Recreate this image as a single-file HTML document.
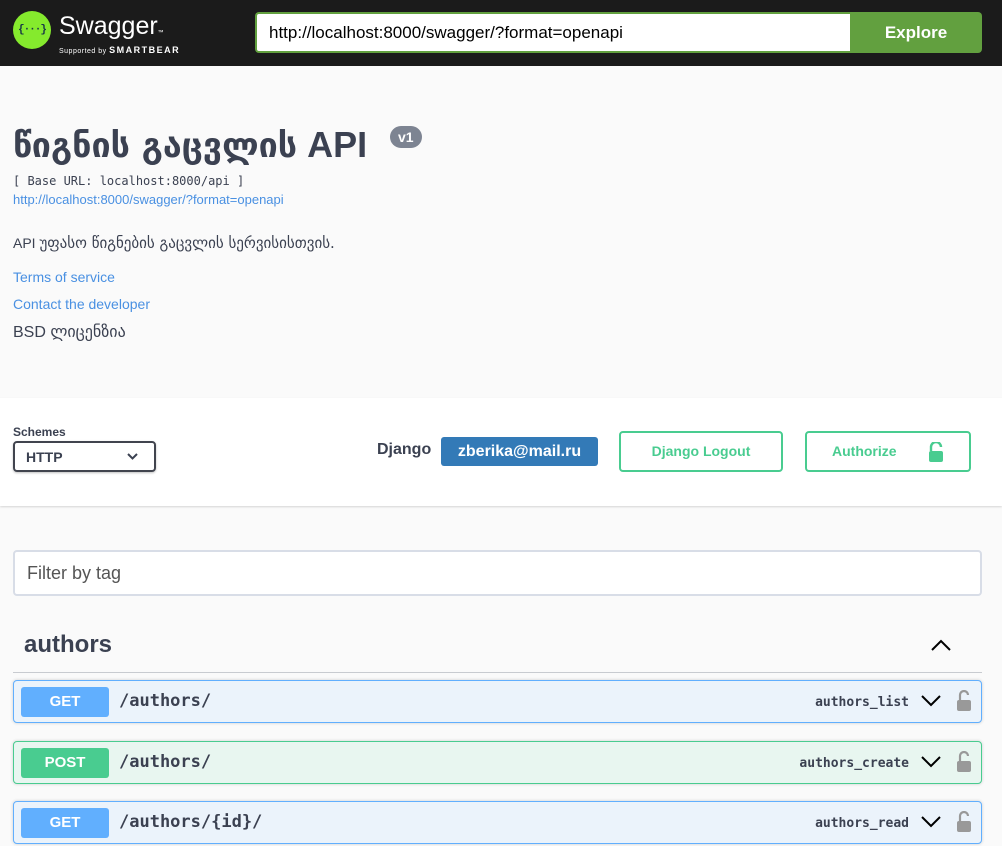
<!DOCTYPE html>
<html><head><meta charset="utf-8"><style>
*{box-sizing:border-box;margin:0;padding:0}
body{width:1002px;height:846px;overflow:hidden;background:#fafafa;font-family:"Liberation Sans","DejaVu Sans",sans-serif;color:#3b4151;position:relative}
.top{position:absolute;left:0;top:0;width:1002px;height:66px;background:#1b1b1b}
.logo{position:absolute;left:13px;top:11px;width:38px;height:38px;border-radius:50%;background:#85ea2d;color:#173647;font:bold 11px "Liberation Mono",monospace;text-align:center;line-height:38px;letter-spacing:-1px}
.sw{position:absolute;left:59px;top:12px;color:#fff;font-size:25px}
.sb{position:absolute;left:59px;top:45px;color:#fff;font-size:7px;letter-spacing:.5px}
.sb b{font-size:9px;letter-spacing:1.5px}
.url{position:absolute;left:255px;top:12px;width:596px;height:41px;border:2px solid #62a03f;border-right:none;border-radius:4px 0 0 4px;background:#fff;font-size:17px;padding:9px 12px;color:#000}
.exp{position:absolute;left:850px;top:12px;width:132px;height:41px;background:#62a03f;color:#fff;font-weight:bold;font-size:17px;text-align:center;line-height:41px;border-radius:0 4px 4px 0}
.a{position:absolute;white-space:nowrap}
h1{position:absolute;left:13px;top:124px;font-size:36px;font-weight:bold;color:#3b4151;white-space:nowrap}
h1 .g{font-family:"DejaVu Sans",sans-serif;font-weight:bold;font-size:34px}
h1 .e{font-family:"Liberation Sans",sans-serif;font-weight:bold;font-size:36px}
.v1{position:absolute;left:390px;top:126px;background:#7d8492;color:#fff;font:bold 14px "Liberation Sans",sans-serif;border-radius:12px;padding:3px 8px}
.lnk{color:#4990e2}
.sch{position:absolute;left:0;top:398px;width:1002px;height:108px;background:#fff;box-shadow:0 1px 2px rgba(0,0,0,.15)}
.sel{position:absolute;left:13px;top:441px;width:143px;height:31px;border:2px solid #41444e;border-radius:4px;box-shadow:0 1px 2px rgba(0,0,0,.25);font-weight:bold;font-size:14px;padding:6px 11px}
.btn{position:absolute;top:431px;height:41px;border:2px solid #49cc90;border-radius:4px;color:#49cc90;font-weight:bold;font-size:14px;text-align:center;line-height:37px}
.filt{position:absolute;left:13px;top:550px;width:969px;height:46px;border:2px solid #d8dde7;border-radius:4px;background:#fff;font-size:18px;color:#555;padding:11px 12px}
.op{position:absolute;left:13px;width:969px;height:43px;border:1px solid #61affe;border-radius:4px;background:#ebf3fb;box-shadow:0 0 3px rgba(0,0,0,.19)}
.op.p{border-color:#49cc90;background:#e8f6f0}
.m{position:absolute;left:7px;top:6px;width:88px;height:30px;background:#61affe;border-radius:3px;color:#fff;font-weight:bold;font-size:15px;text-align:center;line-height:30px}
.p .m{background:#49cc90}
.path{position:absolute;left:105px;top:10px;font:bold 17px "DejaVu Sans Mono","Liberation Mono",monospace;color:#3b4151}
.id{position:absolute;right:72px;top:14px;font:bold 13px "DejaVu Sans Mono","Liberation Mono",monospace;color:#3b4151}
.chev{position:absolute;right:40px;top:13px}
.lock{position:absolute;right:9px;top:9px}
</style></head><body>
<div class="top">
<div class="logo">{···}</div>
<div class="sw">Swagger<span style="font-size:6px">™</span></div>
<div class="sb">Supported by <b>SMARTBEAR</b></div>
<div class="url">http://localhost:8000/swagger/?format=openapi</div>
<div class="exp">Explore</div>
</div>
<h1><span class="g">წიგნის გაცვლის</span> <span class="e">API</span></h1>
<div class="v1">v1</div>
<div class="a" style="left:13px;top:174px;font:12px 'DejaVu Sans Mono','Liberation Mono',monospace;color:#3b4151">[ Base URL: localhost:8000/api ]</div>
<div class="a lnk" style="left:13px;top:192px;font-size:13px">http://localhost:8000/swagger/?format=openapi</div>
<div class="a" style="left:13px;top:234px;font-size:14px">API <span style="font-family:'DejaVu Sans',sans-serif;font-size:15px">უფასო წიგნების გაცვლის სერვისისთვის.</span></div>
<div class="a lnk" style="left:13px;top:269px;font-size:14px">Terms of service</div>
<div class="a lnk" style="left:13px;top:296px;font-size:14px">Contact the developer</div>
<div class="a" style="left:13px;top:322px;font-size:16px">BSD <span style="font-family:'DejaVu Sans',sans-serif;font-size:16px">ლიცენზია</span></div>
<div class="sch"></div>
<div class="a" style="left:13px;top:425px;font-size:12px;font-weight:bold">Schemes</div>
<div class="sel">HTTP<svg style="position:absolute;right:16px;top:10px" width="11" height="8" viewBox="0 0 11 8"><path d="M1 1l4.5 4.5L10 1" stroke="#3b4151" stroke-width="2" fill="none"/></svg></div>
<div class="a" style="left:377px;top:441px;font-size:16px;font-weight:bold">Django</div>
<div class="a" style="left:441px;top:437px;width:157px;height:29px;background:#337ab7;color:#fff;font-weight:bold;font-size:16px;border-radius:3px;text-align:center;line-height:29px">zberika@mail.ru</div>
<div class="btn" style="left:619px;width:164px">Django Logout</div>
<div class="btn" style="left:805px;width:166px;text-align:left;padding-left:25px">Authorize<svg style="position:absolute;left:120px;top:9px" width="18" height="20" viewBox="0 0 18 20"><path d="M4 9V5a5 5 0 0 1 10 0" stroke="#49cc90" stroke-width="2.4" fill="none"/><rect x="2" y="9" width="14" height="11" rx="2" fill="#49cc90"/></svg></div>
<div class="filt">Filter by tag</div>
<div class="a" style="left:24px;top:631px;font-size:24px;font-weight:bold">authors</div>
<svg style="position:absolute;left:931px;top:638px" width="20" height="14" viewBox="0 0 20 14"><path d="M1 12L10 3l9 9" stroke="#000" stroke-width="2" fill="none"/></svg>
<div style="position:absolute;left:13px;top:672px;width:969px;height:1px;background:#c8cbd0"></div>
<div class="op" style="top:680px"><div class="m">GET</div><div class="path">/authors/</div><div class="id">authors_list</div>
<svg class="chev" width="20" height="14" viewBox="0 0 20 14"><path d="M1 2l9 9 9-9" stroke="#000" stroke-width="2" fill="none"/></svg>
<svg class="lock" width="16" height="22" viewBox="0 0 16 22"><path d="M4 10V5a4 4 0 0 1 8 0" stroke="#999" stroke-width="2.2" fill="none"/><rect x="1" y="10" width="14" height="11" rx="2" fill="#999"/></svg></div>
<div class="op p" style="top:741px"><div class="m">POST</div><div class="path">/authors/</div><div class="id">authors_create</div>
<svg class="chev" width="20" height="14" viewBox="0 0 20 14"><path d="M1 2l9 9 9-9" stroke="#000" stroke-width="2" fill="none"/></svg>
<svg class="lock" width="16" height="22" viewBox="0 0 16 22"><path d="M4 10V5a4 4 0 0 1 8 0" stroke="#999" stroke-width="2.2" fill="none"/><rect x="1" y="10" width="14" height="11" rx="2" fill="#999"/></svg></div>
<div class="op" style="top:801px"><div class="m">GET</div><div class="path">/authors/{id}/</div><div class="id">authors_read</div>
<svg class="chev" width="20" height="14" viewBox="0 0 20 14"><path d="M1 2l9 9 9-9" stroke="#000" stroke-width="2" fill="none"/></svg>
<svg class="lock" width="16" height="22" viewBox="0 0 16 22"><path d="M4 10V5a4 4 0 0 1 8 0" stroke="#999" stroke-width="2.2" fill="none"/><rect x="1" y="10" width="14" height="11" rx="2" fill="#999"/></svg></div>
</body></html>
